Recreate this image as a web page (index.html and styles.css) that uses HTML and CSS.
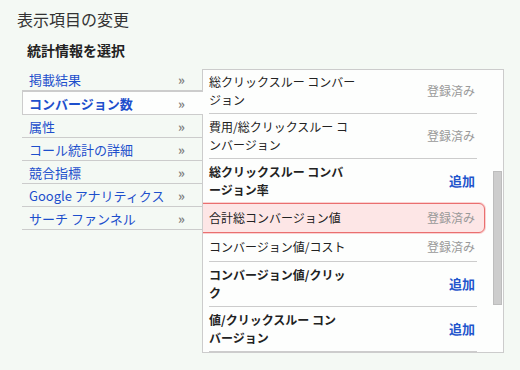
FILE: index.html
```html
<!DOCTYPE html>
<html lang="ja">
<head>
  <meta charset="UTF-8" />
  <title>表示項目の変更</title>
  <link rel="stylesheet" href="styles.css">
</head>
<body>

  <h1 class="title">表示項目の変更</h1>
  <h2 class="subtitle">統計情報を選択</h2>

  <div class="picker">
    <!-- カテゴリ一覧 -->
    <ul class="cats">
      <li class="cat"><span>掲載結果</span><span class="arr">»</span></li>
      <li class="cat active"><span>コンバージョン数</span><span class="arr">»</span></li>
      <li class="cat"><span>属性</span><span class="arr">»</span></li>
      <li class="cat"><span>コール統計の詳細</span><span class="arr">»</span></li>
      <li class="cat"><span>競合指標</span><span class="arr">»</span></li>
      <li class="cat"><span>Google アナリティクス</span><span class="arr">»</span></li>
      <li class="cat"><span>サーチ ファンネル</span><span class="arr">»</span></li>
    </ul>

    <!-- 項目一覧 -->
    <div class="panel">
      <div class="rows">
        <div class="row">
          <div class="name">総クリックスルー コンバー<br>ジョン</div>
          <div class="state">登録済み</div>
        </div>
        <div class="row">
          <div class="name">費用/総クリックスルー コ<br>ンバージョン</div>
          <div class="state">登録済み</div>
        </div>
        <div class="row">
          <div class="name strong">総クリックスルー コンバ<br>ージョン率</div>
          <a class="add" href="#">追加</a>
        </div>
        <div class="row hl">
          <div class="name">合計総コンバージョン値</div>
          <div class="state">登録済み</div>
        </div>
        <div class="row">
          <div class="name">コンバージョン値/コスト</div>
          <div class="state">登録済み</div>
        </div>
        <div class="row">
          <div class="name strong">コンバージョン値/クリッ<br>ク</div>
          <a class="add" href="#">追加</a>
        </div>
        <div class="row">
          <div class="name strong">値/クリックスルー コン<br>バージョン</div>
          <a class="add" href="#">追加</a>
        </div>
      </div>
      <div class="track"><div class="thumb"></div></div>
    </div>
  </div>

</body>
</html>
```

FILE: styles.css
```css
body {
  margin: 0;
  padding: 9px 0 0 17px;
  background: #f4f9f4;
  font-family: "Noto Sans CJK JP", "DejaVu Sans", sans-serif;
  color: #222;
}

.title {
  margin: 0;
  font-size: 16px;
  line-height: 20px;
  font-weight: normal;
  color: #333;
}

.subtitle {
  margin: 11px 0 8px 10px;
  font-size: 14px;
  line-height: 20px;
  font-weight: bold;
  color: #222;
}

.picker {
  display: flex;
  align-items: flex-start;
  margin-left: 5px;
}

.cats {
  list-style: none;
  margin: 0;
  padding: 0;
  width: 180px;
}

.cat {
  display: flex;
  justify-content: space-between;
  align-items: center;
  height: 22px;
  padding: 0 17px 0 7px;
  border-bottom: 1px solid #ccc;
  font-size: 13px;
  color: #1d4fcc;
}

.cat .arr {
  color: #808080;
  font-size: 13px;
  font-weight: bold;
}

.cat.active {
  position: relative;
  z-index: 1;
  margin-right: -1px;
  padding-left: 6px;
  padding-right: 18px;
  background: #fdfefd;
  border-top: 1px solid #ccc;
  border-left: 1px solid #ccc;
  font-weight: bold;
}

.panel {
  display: flex;
  width: 300px;
  margin-top: 1px;
  background: #fdfefd;
  border: 1px solid #ccc;
  overflow: hidden;
}

.rows {
  width: 268px;
  padding-left: 6px;
  margin-top: -1px;
}

.row {
  display: flex;
  justify-content: space-between;
  align-items: center;
  min-height: 20px;
  padding: 4px 2px 4px 0;
  border-bottom: 1px solid #ccc;
  font-size: 12px;
  line-height: 18px;
}

.name {
  color: #222;
}

.name.strong {
  font-weight: bold;
}

.state {
  color: #999;
}

.add {
  color: #1f55cc;
  font-weight: bold;
  font-size: 13px;
  text-decoration: none;
}

.row.hl {
  margin: -1px -8px 0 -12px;
  padding: 4px 9px 4px 11px;
  background: #fde6e6;
  border: 1px solid #ea6f6f;
  border-radius: 6px;
  box-shadow: 0 0 0 1px rgba(240, 130, 130, 0.35);
}

.track {
  width: 9px;
  margin-left: 16px;
}

.thumb {
  margin-top: 101px;
  height: 132px;
  background: #cdcdcd;
  border: 1px solid #bdbdbd;
}
```
